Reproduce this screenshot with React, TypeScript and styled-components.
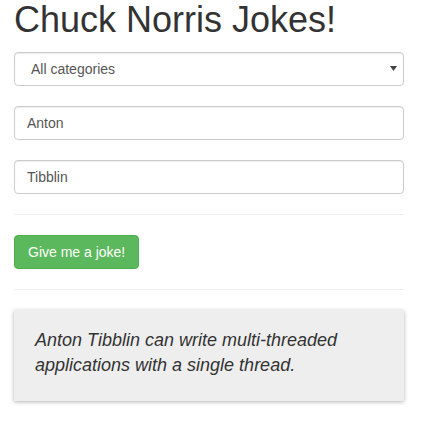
import styled, { createGlobalStyle } from "styled-components";
import { useState } from "react";

const GlobalStyle = createGlobalStyle`
  html, body {
    margin: 0;
    padding: 0;
    background: #fff;
  }
  body {
    font-family: "Liberation Sans", Arial, sans-serif;
    font-size: 14px;
    color: #333;
  }
  * {
    box-sizing: border-box;
  }
`;

const App = () => {
  const [category, setCategory] = useState("all");
  const [firstName, setFirstName] = useState("Anton");
  const [lastName, setLastName] = useState("Tibblin");

  const joke = `${firstName} ${lastName} can write multi-threaded applications with a single thread.`;

  return (
    <>
      <GlobalStyle />
      <Container>
        <Title>Chuck Norris Jokes!</Title>

        <FormGroup>
          <SelectWrap>
            <Select value={category} onChange={(e) => setCategory(e.target.value)}>
              <option value="all">All categories</option>
              <option value="nerdy">nerdy</option>
              <option value="explicit">explicit</option>
            </Select>
            <Caret width="7" height="5" viewBox="0 0 7 5">
              <path d="M0 0 H7 L3.5 5 Z" fill="#444" />
            </Caret>
          </SelectWrap>
        </FormGroup>

        <FormGroup>
          <Input value={firstName} onChange={(e) => setFirstName(e.target.value)} />
        </FormGroup>

        <FormGroup>
          <Input value={lastName} onChange={(e) => setLastName(e.target.value)} />
        </FormGroup>

        <Divider />

        <Button type="button">Give me a joke!</Button>

        <Divider />

        <Well>
          <Joke>{joke}</Joke>
        </Well>
      </Container>
    </>
  );
};

const Container = styled.div`
  width: 418px;
  padding: 0 14px 20px;
`;

const Title = styled.h1`
  font-size: 36px;
  font-weight: 400;
  line-height: 1.1;
  margin: 0 0 12px;
  color: #333;
`;

const FormGroup = styled.div`
  margin-bottom: 20px;
`;

const SelectWrap = styled.div`
  position: relative;
`;

const Select = styled.select`
  appearance: none;
  display: block;
  width: 100%;
  height: 34px;
  padding: 6px 12px 6px 16px;
  font-family: inherit;
  font-size: 14px;
  color: #555;
  background: #fff;
  border: 1px solid #ccc;
  border-radius: 4px;
  box-shadow: inset 0 1px 1px rgba(0, 0, 0, 0.075);
`;

const Caret = styled.svg`
  position: absolute;
  right: 7px;
  top: 14px;
  pointer-events: none;
`;

const Input = styled.input`
  display: block;
  width: 100%;
  height: 34px;
  padding: 6px 12px;
  font-family: inherit;
  font-size: 14px;
  color: #555;
  background: #fff;
  border: 1px solid #ccc;
  border-radius: 4px;
  box-shadow: inset 0 1px 1px rgba(0, 0, 0, 0.075);
`;

const Divider = styled.hr`
  margin: 0 0 20px;
  border: 0;
  border-top: 1px solid #eee;
`;

const Button = styled.button`
  display: block;
  height: 34px;
  padding: 6px 13px;
  margin-bottom: 20px;
  font-family: inherit;
  font-size: 14px;
  color: #fff;
  background: #5cb85c;
  border: 1px solid #4cae4c;
  border-radius: 4px;
  cursor: pointer;
`;

const Well = styled.div`
  width: 390px;
  background: #eee;
  padding: 18px 20px 23px 21px;
  box-shadow: 0 1px 4px rgba(0, 0, 0, 0.3);
`;

const Joke = styled.p`
  margin: 0;
  font-size: 18px;
  line-height: 25px;
  font-style: italic;
  color: #333;
`;

export default App;
